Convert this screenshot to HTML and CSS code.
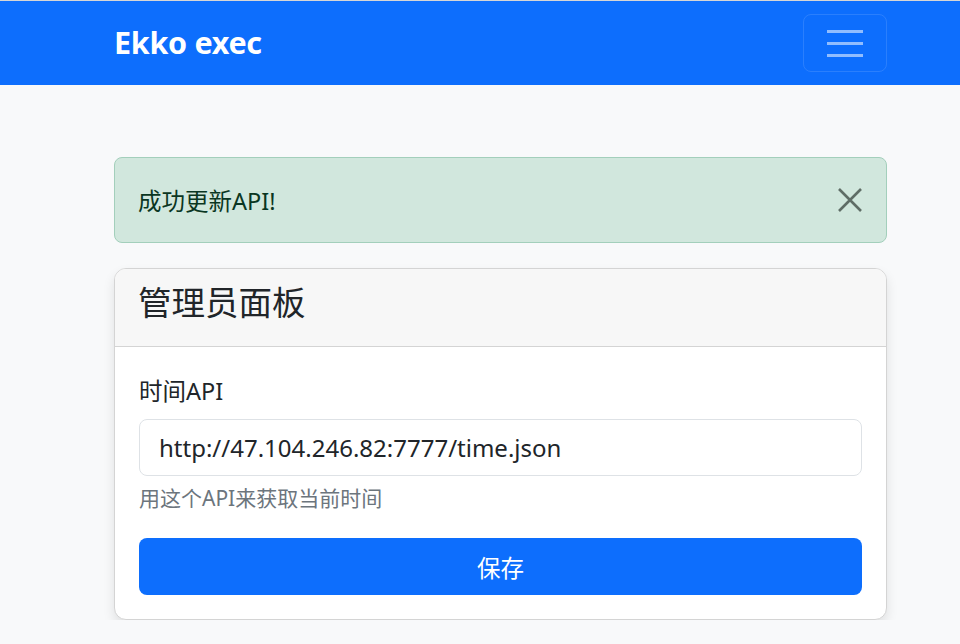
FILE: index.html
```html
<!DOCTYPE html>
<html lang="zh-CN">
<head>
    <meta charset="UTF-8">
    <meta name="viewport" content="width=device-width, initial-scale=1.0">
    <title>Ekko exec</title>
    <link rel="stylesheet" href="styles.css">
</head>
<body>
    <header class="navbar">
        <div class="wrap navbar-inner">
            <a class="brand" href="#">Ekko exec</a>
            <button class="toggler" type="button" aria-label="menu">
                <span class="bar"></span>
                <span class="bar"></span>
                <span class="bar"></span>
            </button>
        </div>
    </header>

    <main class="wrap main">
        <div class="alert">
            <span>成功更新API!</span>
            <button class="close" type="button" aria-label="close">
                <svg width="24" height="24" viewBox="0 0 24 24">
                    <path d="M1 1 L23 23 M23 1 L1 23" stroke="#5f6d66" stroke-width="2.6" fill="none"/>
                </svg>
            </button>
        </div>

        <section class="card">
            <div class="card-header">管理员面板</div>
            <form class="card-body">
                <label class="label" for="api">时间API</label>
                <input class="input" id="api" type="text" value="http://47.104.246.82:7777/time.json">
                <div class="help">用这个API来获取当前时间</div>
                <button class="btn" type="button">保存</button>
            </form>
        </section>
    </main>
</body>
</html>
```

FILE: styles.css
```css
body {
    margin: 0;
    font-family: "Noto Sans", "Noto Sans CJK SC", sans-serif;
    background-color: #f8f9fa;
    color: #212529;
}

.wrap {
    width: 773px;
    margin-left: 114px;
}

.navbar {
    background-color: #0d6efd;
    border-top: 1px solid #d6d6d6;
    height: 84px;
}

.navbar-inner {
    display: flex;
    justify-content: space-between;
    align-items: center;
    height: 100%;
}

.brand {
    color: #ffffff;
    text-decoration: none;
    font-size: 30.5px;
    font-weight: 700;
    letter-spacing: -0.3px;
    margin-top: -3px;
}

.toggler {
    width: 84px;
    height: 58px;
    background: transparent;
    border: 1px solid rgba(255, 255, 255, 0.12);
    border-radius: 8px;
    display: flex;
    flex-direction: column;
    justify-content: center;
    align-items: center;
    gap: 9px;
    padding: 0;
}

.toggler .bar {
    display: block;
    width: 36px;
    height: 3px;
    background-color: rgba(255, 255, 255, 0.55);
}

.main {
    padding-top: 72px;
}

.alert {
    box-sizing: border-box;
    height: 86px;
    background-color: #d1e7dd;
    border: 1px solid #a3cfbb;
    border-radius: 8px;
    color: #0a3622;
    font-size: 23.5px;
    display: flex;
    justify-content: space-between;
    align-items: center;
    padding: 0 24px 0 23px;
}

.close {
    background: transparent;
    border: 0;
    padding: 0;
    display: flex;
}

.card {
    margin-top: 25px;
    background-color: #ffffff;
    border: 1px solid #d4d4d4;
    border-radius: 12px;
    box-shadow: 0 6px 12px rgba(0, 0, 0, 0.1);
    overflow: hidden;
}

.card-header {
    background-color: #f7f7f7;
    border-bottom: 1px solid #d4d4d4;
    height: 78px;
    box-sizing: border-box;
    padding: 10px 23px 0;
    font-size: 33.5px;
    line-height: 46px;
    color: #212529;
}

.card-body {
    padding: 24px 24px 24px;
    display: flex;
    flex-direction: column;
}

.label {
    font-size: 23.5px;
    line-height: 40px;
    margin-bottom: 8px;
}

.input {
    box-sizing: border-box;
    height: 57px;
    border: 1px solid #dee2e6;
    border-radius: 8px;
    padding: 0 19px;
    font-family: "Noto Sans", "Noto Sans CJK SC", sans-serif;
    font-size: 24px;
    color: #212529;
}

.help {
    margin-top: 8px;
    font-size: 21px;
    line-height: 28px;
    color: #6c757d;
}

.btn {
    margin-top: 26px;
    height: 57px;
    border: 0;
    border-radius: 8px;
    background-color: #0d6efd;
    color: #ffffff;
    font-family: "Noto Sans", "Noto Sans CJK SC", sans-serif;
    font-size: 23.5px;
}
```
